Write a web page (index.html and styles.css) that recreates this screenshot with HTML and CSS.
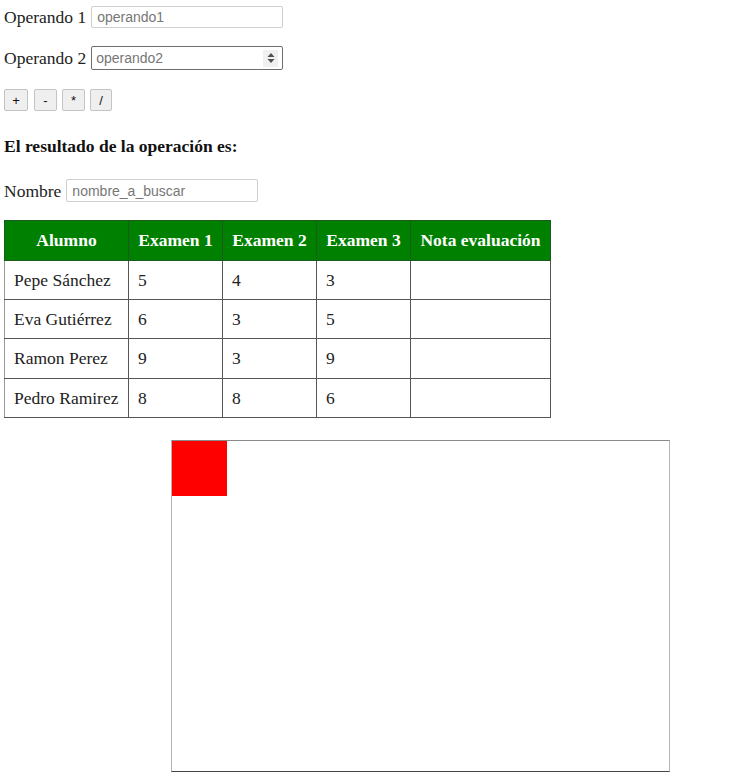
FILE: index.html
```html
<!DOCTYPE html>
<html lang="es">
<head>
<meta charset="utf-8">
<title>Operaciones</title>
<link rel="stylesheet" href="styles.css">
</head>
<body>
<div class="page">
  <div class="row row-op1">
    <label class="lbl">Operando 1</label>
    <input class="field" type="text" placeholder="operando1">
  </div>
  <div class="row row-op2">
    <label class="lbl">Operando 2</label>
    <div class="field field-num">
      <span class="ph">operando2</span>
      <span class="spin">
        <svg width="8" height="12" viewBox="0 0 8 12"><path d="M4 1 L7.5 5 L0.5 5 Z" fill="#505050"/><path d="M4 11 L7.5 7 L0.5 7 Z" fill="#505050"/></svg>
      </span>
    </div>
  </div>
  <div class="row row-btns">
    <button class="btn b1">+</button>
    <button class="btn b2">-</button>
    <button class="btn b3">*</button>
    <button class="btn b4">/</button>
  </div>
  <h3 class="result">El resultado de la operación es:</h3>
  <div class="row row-name">
    <label class="lbl">Nombre</label>
    <input class="field field-name" type="text" placeholder="nombre_a_buscar">
  </div>
  <table class="notas">
    <thead>
      <tr><th class="c1">Alumno</th><th class="c2">Examen 1</th><th class="c3">Examen 2</th><th class="c4">Examen 3</th><th class="c5">Nota evaluación</th></tr>
    </thead>
    <tbody>
      <tr><td>Pepe Sánchez</td><td>5</td><td>4</td><td>3</td><td></td></tr>
      <tr><td>Eva Gutiérrez</td><td>6</td><td>3</td><td>5</td><td></td></tr>
      <tr class="tall"><td>Ramon Perez</td><td>9</td><td>3</td><td>9</td><td></td></tr>
      <tr><td>Pedro Ramirez</td><td>8</td><td>8</td><td>6</td><td></td></tr>
    </tbody>
  </table>
  <div class="canvas">
    <div class="square"></div>
  </div>
</div>
</body>
</html>
```
FILE: styles.css
```css
html, body {
  margin: 0;
  padding: 0;
  background: #fff;
}
.page {
  padding: 6px 0 0 4px;
  font-family: "Liberation Serif", "Times New Roman", serif;
  font-size: 17.5px;
  color: #222;
  display: flex;
  flex-direction: column;
  align-items: flex-start;
}
.row {
  display: flex;
  align-items: center;
  gap: 5px;
}
.lbl {
  line-height: 22px;
}
.field {
  box-sizing: border-box;
  width: 192px;
  height: 22px;
  margin: 0;
  padding: 0 5px;
  border: 1px solid #cfcfcf;
  border-radius: 2px;
  font-family: "Liberation Sans", Arial, sans-serif;
  font-size: 14px;
  color: #222;
  background: #fff;
  outline: none;
}
.field::placeholder {
  color: #777;
}
.row-op2 {
  margin-top: 18px;
}
.field-num {
  height: 24px;
  border-color: #6e6e6e;
  display: flex;
  align-items: center;
  justify-content: space-between;
  padding: 0 4px 0 4px;
}
.ph {
  color: #777;
}
.spin {
  display: flex;
  align-items: center;
  justify-content: center;
  width: 15px;
  height: 17px;
  background: #f0f0f0;
}
.row-btns {
  margin-top: 19px;
  gap: 0;
}
.btn {
  box-sizing: border-box;
  height: 22px;
  margin: 0;
  padding: 0;
  border: 1px solid #c4c4c4;
  border-radius: 2px;
  background: #efefef;
  font-family: "Liberation Sans", Arial, sans-serif;
  font-size: 13px;
  color: #111;
}
.b1 { width: 24px; }
.b2 { width: 23px; margin-left: 6px; }
.b3 { width: 23px; margin-left: 5px; }
.b4 { width: 22px; margin-left: 5px; }
.result {
  margin: 25px 0 0 0;
  font-size: 17.5px;
  font-weight: bold;
  line-height: 20px;
  color: #111;
}
.row-name {
  margin-top: 23px;
  gap: 5px;
}
.field-name {
  width: 192px;
  height: 23px;
}
.notas {
  margin-top: 18px;
  border-collapse: collapse;
  font-size: 17.5px;
}
.notas th, .notas td {
  border: 1px solid #555;
  padding: 0 0 0 9px;
  text-align: left;
  height: 39px;
  box-sizing: border-box;
}
.notas tr.tall td {
  height: 40px;
}
.notas th {
  background: #008000;
  color: #fff;
  font-weight: bold;
  text-align: center;
  padding: 0 6px;
  height: 40px;
  border-color: #1d5a1d;
}
.notas td:first-child { border-left-color: #999; }
.notas td { border-left-color: #bbb; }
.c1 { width: 124px; }
.c2 { width: 94px; }
.c3 { width: 94px; }
.c4 { width: 94px; }
.c5 { width: 140px; }
.canvas {
  box-sizing: border-box;
  margin: 22px 0 0 167px;
  width: 499px;
  height: 332px;
  border: 1px solid #b5b5b5;
  border-top-color: #8a8a8a;
  border-bottom-color: #444;
}
.square {
  width: 55px;
  height: 55px;
  background: #ff0000;
}
```
